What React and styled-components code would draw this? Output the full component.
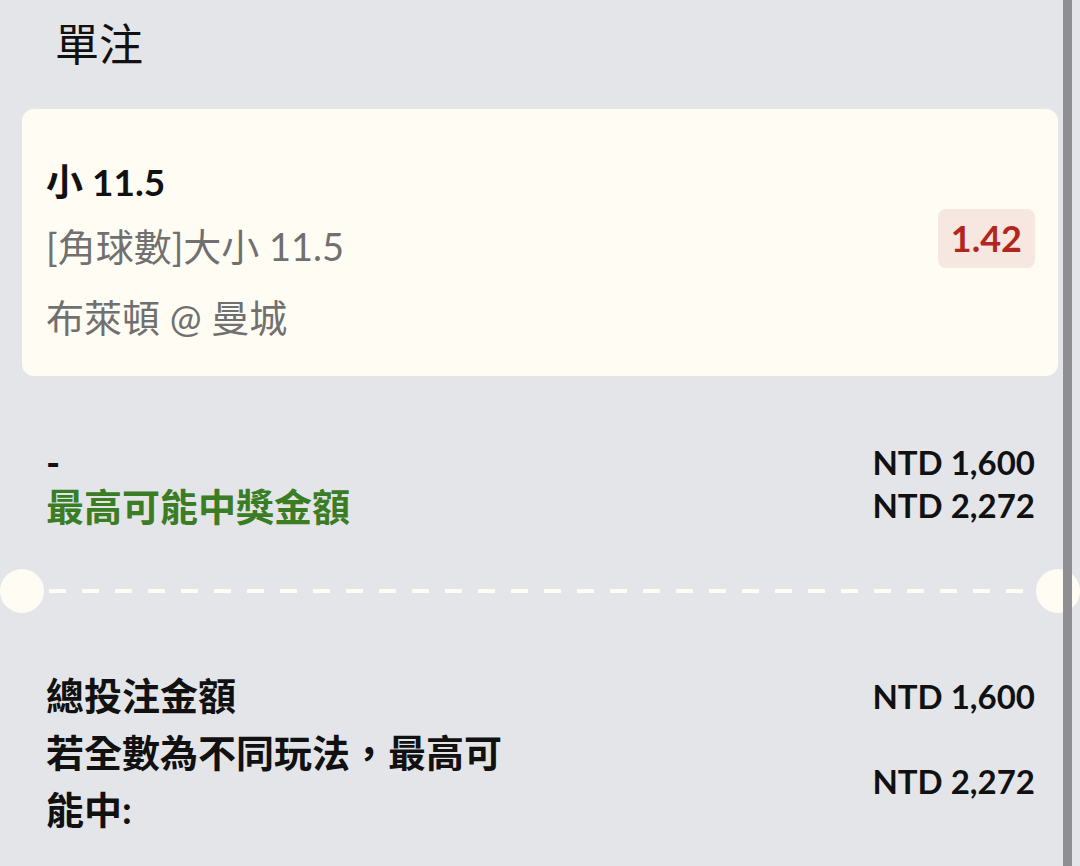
import React from "react";
import styled, { createGlobalStyle } from "styled-components";

const GlobalStyle = createGlobalStyle`
  html, body {
    margin: 0;
    background: #e4e5e8;
  }
  body {
    font-family: Lato, "Noto Sans CJK TC", sans-serif;
    color: #111;
  }
`;

const bet = {
  selection: "小 11.5",
  market: "[角球數]大小 11.5",
  match: "布萊頓 @ 曼城",
  odds: "1.42",
  stake: "NTD 1,600",
  payout: "NTD 2,272",
};

function App() {
  return (
    <>
      <GlobalStyle />
      <Page>
        <Heading>單注</Heading>

        <Card>
          <Info>
            <Selection>{bet.selection}</Selection>
            <Detail>{bet.market}</Detail>
            <Detail $gap>{bet.match}</Detail>
          </Info>
          <Odds>{bet.odds}</Odds>
        </Card>

        <Summary>
          <SummaryRow>
            <Label>-</Label>
            <Amount>{bet.stake}</Amount>
          </SummaryRow>
          <SummaryRow>
            <Label $color="#3a7d24">最高可能中獎金額</Label>
            <Amount>{bet.payout}</Amount>
          </SummaryRow>
        </Summary>

        <Separator>
          <Notch />
          <Dashes />
          <Notch />
        </Separator>

        <Totals>
          <TotalRow>
            <TotalLabel>總投注金額</TotalLabel>
            <Amount>{bet.stake}</Amount>
          </TotalRow>
          <TotalRow>
            <TotalLabel>若全數為不同玩法，最高可能中:</TotalLabel>
            <Amount>{bet.payout}</Amount>
          </TotalRow>
        </Totals>

        <ScrollBar />
      </Page>
    </>
  );
}

const Page = styled.div`
  position: relative;
  min-height: 866px;
  padding: 0 22px;
  box-sizing: border-box;
  overflow: hidden;
`;

const Heading = styled.h1`
  margin: 0;
  height: 109px;
  box-sizing: border-box;
  padding: 18px 0 0 33px;
  font-size: 44px;
  line-height: 52px;
  font-weight: 400;
  color: #111;
`;

const Card = styled.div`
  display: flex;
  justify-content: space-between;
  align-items: flex-start;
  padding: 41px 23px 27px 24px;
  background: #fffcf3;
  border-radius: 12px;
`;

const Info = styled.div`
  display: flex;
  flex-direction: column;
`;

const Selection = styled.div`
  font-size: 37px;
  line-height: 64px;
  font-weight: 700;
  color: #111;
`;

const Detail = styled.div`
  margin-top: ${(p) => (p.$gap ? "7px" : "0")};
  font-size: 38px;
  line-height: 64px;
  font-weight: 400;
  color: #707070;
`;

const Odds = styled.div`
  margin-top: 59px;
  height: 59px;
  padding: 0 13px;
  border-radius: 8px;
  background: #f7e7e1;
  color: #b3261e;
  font-size: 36px;
  font-weight: 700;
  line-height: 59px;
`;

const Summary = styled.div`
  display: flex;
  flex-direction: column;
  padding: 64px 23px 0 24px;
`;

const SummaryRow = styled.div`
  display: flex;
  justify-content: space-between;
  align-items: center;
  height: 43px;
`;

const Label = styled.div`
  font-size: 38px;
  font-weight: 700;
  color: ${(p) => p.$color || "#111"};
`;

const Amount = styled.div`
  font-size: 33px;
  font-weight: 700;
  color: #111;
  text-align: right;
  white-space: nowrap;
`;

const Separator = styled.div`
  display: flex;
  align-items: center;
  margin: 43px -22px 0;
`;

const Notch = styled.div`
  flex: none;
  width: 44px;
  height: 44px;
  border-radius: 50%;
  background: #fffcf3;
`;

const Dashes = styled.div`
  flex: 1;
  height: 4px;
  margin: 0 5px;
  background: repeating-linear-gradient(
    to right,
    #fffcf3 0 17px,
    transparent 17px 33px
  );
`;

const Totals = styled.div`
  display: flex;
  flex-direction: column;
  margin-top: 54px;
  padding: 0 23px 0 24px;
`;

const TotalRow = styled.div`
  display: flex;
  justify-content: space-between;
  align-items: center;
`;

const TotalLabel = styled.div`
  max-width: 470px;
  font-size: 38px;
  line-height: 57px;
  font-weight: 700;
  color: #111;
`;

const ScrollBar = styled.div`
  position: absolute;
  top: 0;
  bottom: 0;
  right: 8px;
  width: 9px;
  background: #8f8f93;
`;

export default App;
